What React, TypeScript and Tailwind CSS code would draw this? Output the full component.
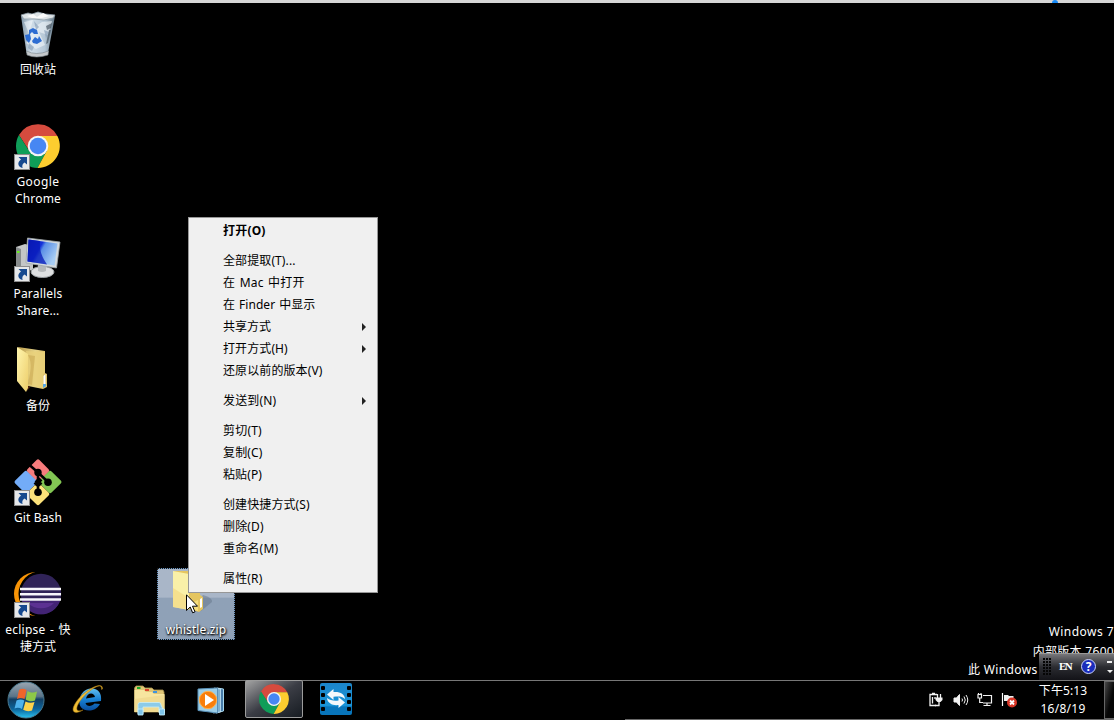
import type { ReactNode } from "react";

function ShortcutArrow() {
  return (
    <svg className="absolute left-0 top-8 h-4 w-4" viewBox="0 0 16 16">
      <rect x="0.5" y="0.5" width="15" height="15" fill="#e6e8ea" stroke="#8c8c8c" />
      <path d="M4.5 3H13V10.5L10.6 8.4C8.6 9.6 7.8 11.5 8.6 14C4 13.4 2.6 8.4 7 5.6Z" fill="#16498f" />
    </svg>
  );
}

function Chrome({ className }: { className: string }) {
  return (
    <svg className={className} viewBox="0 0 44 44">
      <path d="M22 12H41.4A22 22 0 0 0 2.95 11L13.3 27L22 22Z" fill="#d64b3e" />
      <path d="M2.95 11A22 22 0 0 0 21.5 44L30.7 27L22 22L13.3 27Z" fill="#0f9d58" />
      <path d="M22 12H41.4A22 22 0 0 1 21.5 44L30.7 27L22 22Z" fill="#fdcd2f" />
      <circle cx="22" cy="22" r="10.3" fill="#f5f5f5" />
      <circle cx="22" cy="22" r="8.3" fill="#4787f3" />
    </svg>
  );
}

function RecycleBin() {
  return (
    <svg className="h-12 w-12" viewBox="0 0 48 48">
      <defs>
        <linearGradient id="bin" x1="0" x2="1">
          <stop offset="0" stopColor="#8297a8" />
          <stop offset=".3" stopColor="#cfdde8" />
          <stop offset=".7" stopColor="#b5c7d6" />
          <stop offset="1" stopColor="#607482" />
        </linearGradient>
      </defs>
      <path d="M7 6L12.5 43Q22 48 34 43L41 6Z" fill="url(#bin)" />
      <path d="M7 5L14 3L18 4L24 2L31 4L41 5L39 8L30 10L20 9L10 9Z" fill="#dde3e6" stroke="#8c9ba5" strokeWidth=".8" />
      <path d="M13 6L19 4L23 7L29 3L35 6L28 8L18 8Z" fill="#fafafa" />
      <path d="M10 12L19 10L16 20L28 12L38 11L34 25L25 22L31 35L22 39L12 33L17 28Z" fill="#f2f6fa" opacity=".6" />
      <path d="M20 11L25 17L22 20ZM15 33L20 37L18 41L14 38ZM30 20L35 22L32 28Z" fill="#8ba3ba" opacity=".7" />
      <path d="M32 16L38 13L37 18L33 20ZM35 20L37 20L34 33L32 34Z" fill="#3f4e5a" opacity=".65" />
      <path d="M12.5 41Q22 46 34.5 41L34 45Q22 49 13 45Z" fill="#c5c9cc" stroke="#7b8589" strokeWidth=".6" />
      <g fill="#2d6dd2">
        <path d="M15 20L19 18L23 20L24 24L20 24L18 22L15 25Z" />
        <path d="M11 25L16 24L17 29L15 33L12 30Z" />
        <path d="M18 31L21 27L24 29L25 26L28 31L23 34L19 33Z" />
      </g>
    </svg>
  );
}

function Computer() {
  return (
    <svg className="h-12 w-12" viewBox="0 0 48 48">
      <defs>
        <linearGradient id="screen" x1="0" y1="0" x2="1" y2=".5">
          <stop offset="0" stopColor="#0714a8" />
          <stop offset=".45" stopColor="#1431da" />
          <stop offset=".55" stopColor="#5b8fe6" />
          <stop offset="1" stopColor="#a7cdf4" />
        </linearGradient>
      </defs>
      <path d="M2 13L11 10L19 12V36L7 38L2 33Z" fill="#c4c6c6" />
      <path d="M2 13L7 15V36L2 33Z" fill="#888c8d" />
      <rect x="3" y="17" width="2.5" height="2" fill="#69ef20" />
      <path d="M24 28L33 29L33 36H25Z" fill="#a8acae" />
      <ellipse cx="28.500" cy="38" rx="11.500" ry="5.500" fill="#dedfe0" stroke="#9ba0a3" />
      <path d="M24 31H32V37Q28 39 24 37Z" fill="#b6b9bb" />
      <path d="M13.500 4L46 8L42.500 34L12 29Z" fill="#d5dadd" stroke="#9fa7ab" strokeWidth=".8" />
      <path d="M14.500 5.500L43.500 9.500L40.500 31.500L13.500 27.500Z" fill="url(#screen)" />
      <path d="M14.500 5.500L26 7C25 16 28 23 33 30.500L13.500 27.500Z" fill="#0819b8" opacity=".75" />
    </svg>
  );
}

function Folder() {
  return (
    <svg className="h-12 w-12" viewBox="0 0 48 48">
      <defs>
        <linearGradient id="folder-back" x1="0" x2="1">
          <stop offset="0" stopColor="#b99b4c" />
          <stop offset=".6" stopColor="#e7d488" />
          <stop offset="1" stopColor="#dcbe64" />
        </linearGradient>
        <linearGradient id="folder-front" x1="0" y1="0" x2="1" y2="1">
          <stop offset="0" stopColor="#fff5ae" />
          <stop offset="1" stopColor="#edce6b" />
        </linearGradient>
      </defs>
      <path d="M4 1L31 5V27L33 28V41L29 43L14 40L8 35Z" fill="url(#folder-back)" />
      <path d="M12 5L31 6V27L29 28V42L15 39Z" fill="#e9d27b" opacity=".75" />
      <path d="M14 9C19 18 16 27 14 38L18 39L21 10Z" fill="#c9a953" opacity=".6" />
      <path d="M14 40L16 41L13 45Z" fill="#5a2614" />
      <path d="M3 1L14 8V42L12 46L3 35Z" fill="url(#folder-front)" />
      <path d="M29.500 30L31.500 28V38L29.500 40Z" fill="#fff" />
      <path d="M29 38H32V40L29 42Z" fill="#57a8e5" />
    </svg>
  );
}

function Git() {
  return (
    <svg className="h-12 w-12" viewBox="0 0 48 48">
      <rect x="15.500" y="2" width="17" height="17" rx="2" fill="#f77c7d" transform="rotate(45 24 10.500) translate(1.500 1.500)" />
      <rect x="2.500" y="15.500" width="17" height="17" rx="2" fill="#73acf8" transform="rotate(45 11 24) translate(.6 -.6)" />
      <rect x="28.500" y="15.500" width="17" height="17" rx="2" fill="#82c653" transform="rotate(45 37 24) translate(-.6 .6)" />
      <rect x="15.500" y="27.500" width="17" height="17" rx="2" fill="#fce27a" transform="rotate(45 24 36)" />
      <path d="M14.500 6L24 14.500V34M24 14.500L34 24" fill="none" stroke="#000" strokeWidth="2.600" />
      <path d="M22 22L27 27M27 21L21 27" stroke="#000" strokeWidth="4" />
      <circle cx="24" cy="14.500" r="3.700" />
      <circle cx="34" cy="24.300" r="3.800" />
      <circle cx="24" cy="34.300" r="3.800" />
    </svg>
  );
}

function Eclipse() {
  return (
    <svg className="h-12 w-12" viewBox="0 0 48 48">
      <circle cx="22" cy="24" r="22" fill="#f89406" />
      <circle cx="27.500" cy="24" r="23" fill="#000" />
      <circle cx="27" cy="24" r="20.200" fill="#302358" />
      <path d="M8 31H46A20.200 20.200 0 0 1 8 31Z" fill="#432475" />
      <path d="M14 33H40C34 40 20 40 14 33Z" fill="#5c3192" />
      <path d="M6 19H47M6 24.300H47M6 29.500H47" stroke="#f7f6fb" strokeWidth="2.600" />
    </svg>
  );
}

function DesktopIcon({ art, shortcut, lines }: { art: ReactNode; shortcut?: boolean; lines: [string, string][] }) {
  return (
    <div className="flex h-28 w-[76px] shrink-0 flex-col items-center">
      <div className="relative h-12 w-12">
        {art}
        {shortcut && <ShortcutArrow />}
      </div>
      <div className="mt-[3px] flex w-full flex-col items-center leading-[17px] text-white">
        {lines.map(([text, spacing]) => (
          <div key={text} className={`whitespace-nowrap ${spacing}`}>{text}</div>
        ))}
      </div>
    </div>
  );
}

type Item = { label: string; spacing?: string; submenu?: boolean; bold?: boolean };

const groups: Item[][] = [
  [{ label: "打开(O)", bold: true, spacing: "tracking-[0.2px]" }],
  [
    { label: "全部提取(T)...", spacing: "tracking-[0.1px]" },
    { label: "在 Mac 中打开", spacing: "tracking-[0.15px] [word-spacing:1.3px]" },
    { label: "在 Finder 中显示", spacing: "tracking-[0.05px] [word-spacing:0.8px]" },
    { label: "共享方式", submenu: true },
    { label: "打开方式(H)", submenu: true, spacing: "tracking-[0.1px]" },
    { label: "还原以前的版本(V)", spacing: "tracking-[0.1px]" },
  ],
  [{ label: "发送到(N)", submenu: true, spacing: "tracking-[0.15px]" }],
  [
    { label: "剪切(T)", spacing: "tracking-[0.2px]" },
    { label: "复制(C)", spacing: "tracking-[0.15px]" },
    { label: "粘贴(P)", spacing: "tracking-[0.1px]" },
  ],
  [
    { label: "创建快捷方式(S)", spacing: "tracking-[0.1px]" },
    { label: "删除(D)", spacing: "tracking-[0.15px]" },
    { label: "重命名(M)", spacing: "tracking-[0.2px]" },
  ],
  [{ label: "属性(R)", spacing: "tracking-[0.15px]" }],
];

function ContextMenu() {
  return (
    <div className="absolute left-[188px] top-[217px] flex h-[376px] w-[190px] flex-col gap-2 border border-[#979797] bg-[#f0f0f0] py-0.5 text-black">
      {groups.map((items, i) => (
        <div key={i}>
          {items.map((item) => (
            <div key={item.label} className={`flex h-[22px] items-center justify-between pl-[34px] pr-[11px] ${item.bold ? "font-bold" : ""}`}>
              <span className={`whitespace-nowrap ${item.spacing ?? ""}`}>{item.label}</span>
              {item.submenu && (
                <svg className="mb-px h-[8px] w-1" viewBox="0 0 4 8">
                  <path d="M0 0L4 4L0 8Z" fill="#222" />
                </svg>
              )}
            </div>
          ))}
        </div>
      ))}
    </div>
  );
}

function SelectedFile() {
  return (
    <div className="absolute left-[157px] top-[568px] flex h-[72px] w-[78px] flex-col items-center border border-[#6d9ac9] bg-gradient-to-b from-[#a9b6c8] from-40% to-[#8fa1b7] to-42% outline-1 -outline-offset-1 outline-dotted outline-[#1a1a1a]">
      <div className="flex h-[52px] w-12 pt-px">
        <svg className="h-12 w-[50px] shrink-0" viewBox="0 0 50 48">
          <path d="M22 36L31 25Q41 28 40 32L29 41L19 42Z" fill="#66758a" opacity=".5" />
          <path d="M2 1H28V25L31 27V39L27 42L17 39Z" fill="#e5c55f" />
          <path d="M22 32L26 30V41L19 39Z" fill="#f6dd7c" />
          <path d="M1 1L17 4V40L1 37Z" fill="#f9f0a8" />
          <path d="M1 18L17 28V40L1 37Z" fill="#f2d77f" opacity=".65" />
          <path d="M28 29L30 28V37L28 38Z" fill="#fff" />
        </svg>
      </div>
      <div className="whitespace-nowrap leading-[17px] tracking-[0.1px] text-white [text-shadow:1px_1px_2px_#000,0_1px_2px_#000]">whistle.zip</div>
    </div>
  );
}

function Cursor() {
  return (
    <svg className="absolute left-[186px] top-[594px] h-5 w-3" viewBox="0 0 12 20">
      <path d="M.5 .8V16.5L4.2 13L6.7 18.8L9 17.8L6.5 12.2H11.5Z" fill="#fff" stroke="#000" />
    </svg>
  );
}

function StartOrb() {
  return (
    <svg className="h-[38px] w-[38px]" viewBox="0 0 38 38">
      <defs>
        <linearGradient id="orb" x1="0" y1="0" x2="0" y2="1">
          <stop offset="0" stopColor="#9aa6b1" />
          <stop offset=".4" stopColor="#5b7488" />
          <stop offset=".48" stopColor="#123e63" />
          <stop offset=".75" stopColor="#0c649c" />
          <stop offset="1" stopColor="#2ac4f0" />
        </linearGradient>
      </defs>
      <circle cx="19" cy="19" r="18" fill="url(#orb)" stroke="#49798f" />
      <path d="M12 9C14.500 7 17 7.500 19.500 9L17.500 18C15 16.800 12.500 16.600 10 18Z" fill="#ee652b" />
      <path d="M20.500 10C24 12 27 12 30 10.500L28 19.500C25 20.800 21.500 20.500 18.700 18.500Z" fill="#8dc848" />
      <path d="M9.500 19.500C12.500 18 15 18.300 17.300 19.500L15 28C12.500 26.500 10 26.500 7.500 27.500Z" fill="#4fb2ed" />
      <path d="M18.500 20.500C21.500 22 24.500 22.200 27.500 21L25 29.500C22 30.600 19 30.500 16.200 28.800Z" fill="#fdd24b" />
    </svg>
  );
}

function Explorer() {
  return (
    <svg className="h-8 w-[34px]" viewBox="0 0 34 32">
      <path d="M1.500 3L3 1H10L12 3H19L21 5H30L31 7V27H1.500Z" fill="#dfc575" stroke="#a8924e" strokeWidth=".8" />
      <rect x="4" y="2" width="3.500" height="2" fill="#17aa27" />
      <rect x="12" y="4" width="4" height="2" fill="#dd432d" />
      <rect x="20" y="6" width="4" height="2" fill="#3f94dd" />
      <path d="M1.500 5H11L13 7H19L21 9H31.500V27H1.500Z" fill="#f7e59f" />
      <path d="M1.500 14L31.500 10V27H1.500Z" fill="#edd388" opacity=".6" />
      <path d="M5 19.500Q5 17.500 7 17.500H26Q28 17.500 28 20L31.500 28H26V22H10V29H5Z" fill="#8ccbe9" stroke="#c6edf9" strokeWidth=".8" />
      <path d="M5 24H10V30H5ZM26.500 24H31.500V30H26.500Z" fill="#7fc4ea" stroke="#c8f1ff" strokeWidth=".8" />
    </svg>
  );
}

function InternetExplorer() {
  return (
    <svg className="h-8 w-8" viewBox="0 0 32 32">
      <defs>
        <linearGradient id="ie" x1="0" y1="0" x2="0" y2="1">
          <stop offset="0" stopColor="#63bff0" />
          <stop offset=".5" stopColor="#1780d4" />
          <stop offset="1" stopColor="#0a4d9e" />
        </linearGradient>
      </defs>
      <path fillRule="evenodd" d="M29 18L13.500 20C14.500 24 20 23.500 22.500 20.500L28 21C25 26 21 27.500 17 27.500C10 27.500 6.500 23 7.500 17C8.500 10 13 6 19 5.500C26 5 30 10 29 18ZM14 15.500L23 14C22 8.500 15 9.500 14 15.500Z" fill="url(#ie)" />
      <path d="M30.500 6C31 1.500 26 1.500 19 5.500C11 10 4 17.500 1.500 24C-.5 30 4.500 31 11 27C6 29 3.500 27.500 5.500 22.500C8.500 16 15 9.500 22 5C27 2 30 2 29.500 6.500Z" fill="#efbd35" stroke="#a97812" strokeWidth=".5" />
    </svg>
  );
}

function MediaPlayer() {
  return (
    <svg className="h-[27px] w-7" viewBox="0 0 28 27">
      <path d="M20 1L26.500 2V24L19 26Z" fill="#477ba9" stroke="#a7d7ed" />
      <path d="M17 1L23.500 2V25L16 26Z" fill="#7eb1d2" stroke="#d3eefa" strokeWidth=".7" />
      <path d="M1 2L20.500 1V26L1 23.500Z" fill="#9bcde7" stroke="#5990b8" />
      <circle cx="11" cy="13" r="8.700" fill="#f87e0b" stroke="#ffb24f" />
      <path d="M8 7L17 13L8 19Z" fill="#fff" />
    </svg>
  );
}

function FilmTransfer() {
  return (
    <svg className="h-8 w-8" viewBox="0 0 32 32">
      <defs>
        <linearGradient id="film" x1="0" y1="0" x2="0" y2="1">
          <stop stopColor="#1c85c9" />
          <stop offset=".7" stopColor="#1a94d8" />
          <stop offset=".75" stopColor="#0875bb" />
        </linearGradient>
      </defs>
      <rect width="32" height="32" rx="2" fill="url(#film)" />
      <g fill="#000">
        {[3, 10, 17, 24].map((y) => (
          <g key={y}>
            <rect x="1" y={y} width="4" height="4" rx="1" />
            <rect x="27" y={y} width="4" height="4" rx="1" />
          </g>
        ))}
      </g>
      <path d="M7 11.500L13.500 6V9C20 8.500 24.500 10.500 25 16C21.500 12.800 18 13.500 13.500 13.800V17Z" fill="#f5f8fb" />
      <path d="M25 19.500L18.500 14V17.500C14 18 10 17.500 7 15C7.500 20.500 13 22.800 18.500 22V25Z" fill="#f5f8fb" />
    </svg>
  );
}

function TrayIcons() {
  return (
    <div className="flex items-center">
      <svg className="h-4 w-4" viewBox="0 0 16 16" fill="none" stroke="#f2f2f2" strokeWidth="1.3">
        <path d="M9 2.500H2V13.500H8M4 1.500H7M4.500 5V11.500M7 5V7" />
        <path d="M9.500 2V6M12.500 2V6" />
        <path d="M7.500 5.500H14.500V8L12.500 10H9.500L7.500 8Z" fill="#f2f2f2" stroke="none" />
        <path d="M11 10V13.500H7" />
      </svg>
      <svg className="ml-[9px] h-4 w-4" viewBox="0 0 16 16" fill="none" stroke="#f2f2f2">
        <path d="M1 6H3.500L6.500 2.500V13.500L3.500 10H1Z" fill="#f2f2f2" />
        <path d="M9 6.500Q10 8 9 9.500M11 4.500Q13.500 8 11 11.500M13 3Q16.500 8 13 13" />
      </svg>
      <svg className="ml-2 h-4 w-4" viewBox="0 0 16 16" fill="none" stroke="#f2f2f2" strokeWidth="1.2">
        <path d="M1 2.500H4.500V6H1ZM1.500 1V3M4 1V3M2.700 6V10.500H6M6 3.500H14.500V11H6M10 11V13.500M6.500 13.500H13.500" />
      </svg>
      <svg className="ml-2 h-4 w-4" viewBox="0 0 16 16">
        <path d="M1.500 1V14" stroke="#fff" strokeWidth="1.2" />
        <path d="M3 3H7L8 4H12.500V9H3Z" fill="#eee" />
        <circle cx="11" cy="10.500" r="5" fill="#d83627" />
        <path d="M9 8.500L13 12.500M13 8.500L9 12.500" stroke="#fff" strokeWidth="1.8" />
      </svg>
    </div>
  );
}

function Taskbar() {
  return (
    <footer className="flex h-10 items-stretch border-t border-[#777] bg-black">
      <div className="flex w-[245px] items-start">
        <div className="ml-[7px]"><StartOrb /></div>
        <div className="ml-[27px] mt-[2px]"><InternetExplorer /></div>
        <div className="ml-[29px] mt-[4px]"><Explorer /></div>
        <div className="ml-[30px] mt-[6px]"><MediaPlayer /></div>
      </div>
      <div className="-mt-px flex h-[38px] w-[58px] items-center justify-center rounded-[2px] border border-[#9c9c9c] bg-gradient-to-br from-[#a3a3a3] via-[#3b3d45] to-[#171c22]">
        <Chrome className="h-[30px] w-[30px]" />
      </div>
      <div className="ml-[17px] mt-[2px]"><FilmTransfer /></div>
      <div className="ml-auto flex w-[489px] items-start justify-end border-b border-[#686868]">
        <div className="mt-[11px]"><TrayIcons /></div>
        <div className="ml-[15px] mt-px flex w-[62px] flex-col items-center leading-[18px] text-white">
          <div className="tracking-[0.1px]">下午5:13</div>
          <div className="tracking-[0.25px]">16/8/19</div>
        </div>
        <div className="ml-[10px] h-[38px] w-[10px] border border-r-0 border-[#666] bg-gradient-to-br from-[#4a4a4a] to-[#050505] to-60%" />
      </div>
    </footer>
  );
}

function LanguageBar() {
  return (
    <div className="absolute left-[1039px] top-[653px] flex h-[27px] w-[75px] border-t border-[#999] bg-gradient-to-b from-[#77777a] via-[#2b2c31] to-[#131318]">
      <svg className="ml-[3px] mt-[3px] h-5 w-[10px] shrink-0" viewBox="0 0 10 20">
        {[1, 4, 7, 10, 13, 16].map((y) => [1, 4, 7].map((x) => <rect key={`${x}-${y}`} x={x} y={y} width="2" height="2" fill="#050505" />))}
      </svg>
      <span className="ml-[7px] mt-[5px] w-[13px] shrink-0 font-['Liberation_Serif',serif] text-[11px] font-bold leading-[15px] tracking-[-1.5px] text-white">EN</span>
      <span className="ml-[9px] mt-[5px] flex h-[15px] w-[15px] shrink-0 items-center justify-center rounded-full border border-[#cbd3fa] bg-[#1a2dbb] text-[12px] font-bold leading-none text-white">?</span>
      <svg className="ml-[11px] mt-[6px] h-4 w-[7px] shrink-0" viewBox="0 0 7 16">
        <path d="M0 1H5V3H0ZM0 10H6L3 13Z" fill="#eee" />
      </svg>
    </div>
  );
}

export default function App() {
  return (
    <div className="relative flex h-[720px] w-[1114px] flex-col overflow-hidden bg-black font-['Noto_Sans','Noto_Sans_CJK_SC',sans-serif] text-[12px]">
      <header className="h-[3px] bg-[#d6d6d6]">
        <div className="ml-[1052px] h-[3px] w-[6px] rounded-t-full bg-[#168af8]" />
      </header>
      <main className="flex h-[677px] justify-between">
        <div className="flex flex-col pt-[7px]">
          <DesktopIcon art={<RecycleBin />} lines={[["回收站", ""]]} />
          <DesktopIcon art={<Chrome className="mx-auto mb-[2px] h-[46px] w-[44px] pt-[2px]" />} shortcut lines={[["Google", "tracking-[0.45px]"], ["Chrome", "tracking-[0.2px]"]]} />
          <DesktopIcon art={<Computer />} shortcut lines={[["Parallels", "tracking-[0.2px]"], ["Share...", "tracking-[0.1px]"]]} />
          <DesktopIcon art={<Folder />} lines={[["备份", ""]]} />
          <DesktopIcon art={<Git />} shortcut lines={[["Git Bash", "tracking-[0.15px]"]]} />
          <DesktopIcon art={<Eclipse />} shortcut lines={[["eclipse - 快", "tracking-[0.25px] [word-spacing:1px]"], ["捷方式", ""]]} />
        </div>
        <div className="mt-[619px] flex w-[146px] flex-col items-end leading-[19px] text-white">
          <span className="whitespace-nowrap tracking-[0.45px]">Windows 7</span>
          <span className="relative top-px whitespace-nowrap tracking-[0.3px]">内部版本 7600</span>
          <span className="self-start whitespace-nowrap tracking-[0.35px]">此 Windows</span>
        </div>
      </main>
      <Taskbar />
      <SelectedFile />
      <ContextMenu />
      <LanguageBar />
      <Cursor />
    </div>
  );
}
